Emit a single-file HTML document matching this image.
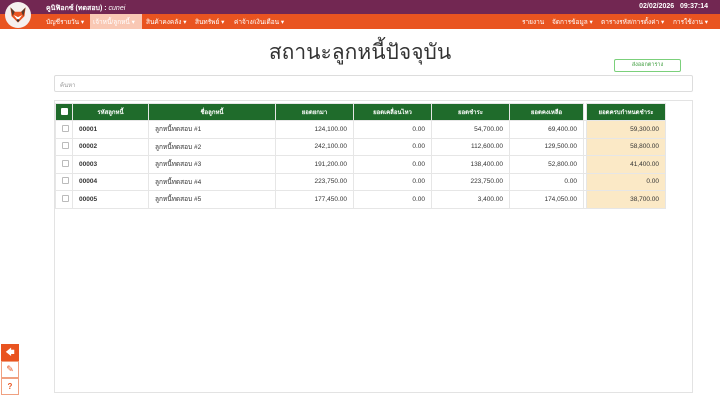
<!DOCTYPE html>
<html><head><meta charset="utf-8"><style>
*{box-sizing:border-box;margin:0;padding:0}
body{width:720px;height:405px;background:#fff;font-family:"Liberation Sans","DejaVu Sans",sans-serif;position:relative;overflow:hidden}
.top{position:absolute;left:0;top:0;width:720px;height:14px;background:#722752;color:#fff;font-size:7px;font-weight:bold}
.nav{position:absolute;left:0;top:14px;width:720px;height:15px;background:#e95420;color:#fff;font-size:6.5px}
.nav span{position:absolute;top:3px}
.logo{position:absolute;left:5px;top:2px;width:26px;height:26px;border-radius:50%;background:#f5f0ee;z-index:2}
.title{position:absolute;left:0;width:720px;top:36px;text-align:center;font-size:21px;color:#333}
.btn{position:absolute;left:614px;top:59px;width:67px;height:13px;border:1px solid #7bd07b;border-radius:2px;font-size:5.5px;color:#3a9b3a;text-align:center;line-height:11px}
.search{position:absolute;left:54px;top:75px;width:639px;height:17px;border:1px solid #ddd;border-radius:2px;font-size:6px;color:#999;padding:4px 5px}
.box{position:absolute;left:54px;top:100px;width:639px;height:293px;border:1px solid #e3e3e3}
table{position:absolute;left:55px;top:103px;border-collapse:collapse;font-size:6.5px;color:#333;table-layout:fixed;width:610px}
th{background:#1f6b2b;color:#fff;height:17px;font-weight:bold;font-size:6px;border:1px solid #e6e6e6}
td{height:17.5px;border:1px solid #e6e6e6;padding:0 6px}
td.r{text-align:right}
td.b{font-weight:bold}
.y{background:#fbe9c6}
.cb{display:inline-block;width:7px;height:7px;border:1px solid #bbb;border-radius:1px;background:#fff}
.side{position:absolute;left:1px;width:18px;height:17px;border:1px solid #f0a080;background:#fff;color:#e95420;font-size:9px;text-align:center;line-height:15px}
</style></head><body>
<div class="top"><span style="position:absolute;left:46px;top:3px">คูนิฟิอกซ์ (ทดสอบ) : <i style="font-weight:normal">cunei</i></span><span style="position:absolute;right:12px;top:3px">02/02/2026&nbsp;&nbsp;&nbsp;09:37:14</span></div>
<div class="nav">
<span style="left:46px">บัญชีรายวัน ▾</span>
<span style="left:90px;top:0;height:15px;width:52px;background:#f9c8b4;color:#fff;padding:3px 3px">เจ้าหนี้/ลูกหนี้ ▾</span>
<span style="left:146px">สินค้าคงคลัง ▾</span>
<span style="left:195px">สินทรัพย์ ▾</span>
<span style="left:234px">ค่าจ้าง/เงินเดือน ▾</span>
<span style="left:522px">รายงาน</span>
<span style="left:552px">จัดการข้อมูล ▾</span>
<span style="left:601px">ตารางรหัส/การตั้งค่า ▾</span>
<span style="left:673px">การใช้งาน ▾</span>
</div>
<div class="logo"><svg width="26" height="26" viewBox="0 0 24 24"><path d="M5 5 L9 9 L15 9 L19 5 L18 13 L12 19 L6 13 Z" fill="#e95420"/><path d="M8 12 L12 17 L16 12 L12 14 Z" fill="#fff"/><circle cx="12" cy="17" r="1.2" fill="#333"/><path d="M5 5 L9 9 L7 13Z M19 5 L15 9 L17 13Z" fill="#5a3a2a"/></svg></div>
<div class="title">สถานะลูกหนี้ปัจจุบัน</div>
<div class="btn">ส่งออกตาราง</div>
<div class="search">ค้นหา</div>
<div class="box"></div>
<table>
<colgroup><col style="width:17px"><col style="width:76px"><col style="width:127px"><col style="width:78px"><col style="width:78px"><col style="width:78px"><col style="width:74px"><col style="width:3px"><col style="width:79px"></colgroup>
<tr><th><span class="cb" style="border-color:#fff"></span></th><th>รหัสลูกหนี้</th><th>ชื่อลูกหนี้</th><th>ยอดยกมา</th><th>ยอดเคลื่อนไหว</th><th>ยอดชำระ</th><th>ยอดคงเหลือ</th><th style="background:#fff;border:none;border-left:1px solid #1f6b2b"></th><th>ยอดครบกำหนดชำระ</th></tr>
<tr><td><span class="cb"></span></td><td class="b">00001</td><td>ลูกหนี้ทดสอบ #1</td><td class="r">124,100.00</td><td class="r">0.00</td><td class="r">54,700.00</td><td class="r">69,400.00</td><td style="padding:0"></td><td class="r y">59,300.00</td></tr>
<tr><td><span class="cb"></span></td><td class="b">00002</td><td>ลูกหนี้ทดสอบ #2</td><td class="r">242,100.00</td><td class="r">0.00</td><td class="r">112,600.00</td><td class="r">129,500.00</td><td style="padding:0"></td><td class="r y">58,800.00</td></tr>
<tr><td><span class="cb"></span></td><td class="b">00003</td><td>ลูกหนี้ทดสอบ #3</td><td class="r">191,200.00</td><td class="r">0.00</td><td class="r">138,400.00</td><td class="r">52,800.00</td><td style="padding:0"></td><td class="r y">41,400.00</td></tr>
<tr><td><span class="cb"></span></td><td class="b">00004</td><td>ลูกหนี้ทดสอบ #4</td><td class="r">223,750.00</td><td class="r">0.00</td><td class="r">223,750.00</td><td class="r">0.00</td><td style="padding:0"></td><td class="r y">0.00</td></tr>
<tr><td><span class="cb"></span></td><td class="b">00005</td><td>ลูกหนี้ทดสอบ #5</td><td class="r">177,450.00</td><td class="r">0.00</td><td class="r">3,400.00</td><td class="r">174,050.00</td><td style="padding:0"></td><td class="r y">38,700.00</td></tr>
</table>
<div class="side" style="top:344px;background:#e95420;color:#fff;border-color:#e95420">🡄</div>
<div class="side" style="top:361px">✎</div>
<div class="side" style="top:378px;font-weight:bold;font-size:8px">?</div>
</body></html>
